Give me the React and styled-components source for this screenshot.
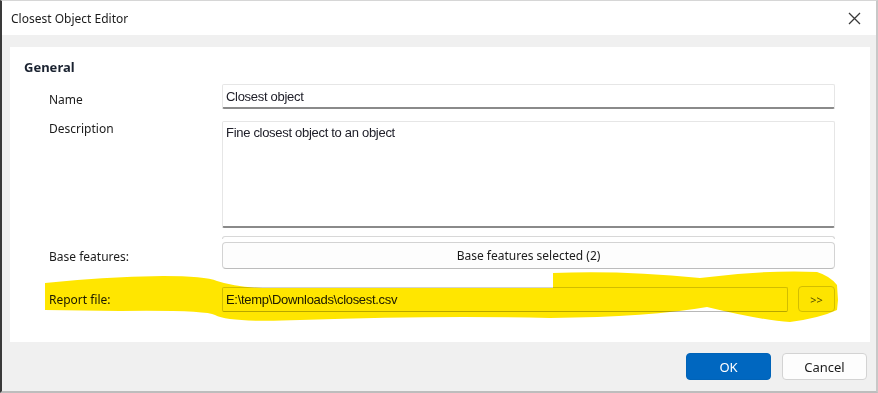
import React from "react";
import styled, { createGlobalStyle } from "styled-components";

const GlobalStyle = createGlobalStyle`
  html, body {
    margin: 0;
    padding: 0;
    background: #ffffff;
  }
  * {
    box-sizing: border-box;
  }
`;

const Window = styled.div`
  position: relative;
  width: 878px;
  height: 393px;
  display: flex;
  flex-direction: column;
  background: #f0f0f0;
  border-left: 2px solid #3a3a3a;
  border-right: 2px solid #c8c8c8;
  border-top: 1px solid #d6d6d6;
  border-bottom: 2px solid #bdbdbd;
  font-family: "Noto Sans", "Open Sans", sans-serif;
  color: #1b1b1b;
  overflow: hidden;
`;

const TitleBar = styled.div`
  height: 34px;
  flex: none;
  display: flex;
  align-items: center;
  justify-content: space-between;
  padding: 0 14px 0 9px;
  background: #ffffff;
  font-size: 12px;
`;

const CloseButton = styled.button`
  width: 16px;
  height: 16px;
  padding: 0;
  border: none;
  background: none;
  display: flex;
  align-items: center;
  justify-content: center;
`;

const Body = styled.div`
  flex: 1;
  display: flex;
  flex-direction: column;
  padding: 12px 6px 0 8px;
`;

const Panel = styled.div`
  background: #ffffff;
  height: 295px;
  padding: 10px 35px 0 14px;
`;

const SectionTitle = styled.div`
  font-size: 13px;
  font-weight: 700;
  line-height: 20px;
  color: #1a2230;
`;

const Form = styled.div`
  display: grid;
  grid-template-columns: 173px 1fr;
  margin: 1px 0 0 25px;
`;

const Label = styled.div`
  font-size: 12px;
  line-height: 16px;
  padding-top: ${(p) => p.$top || 0}px;
  margin-top: ${(p) => p.$gap || 0}px;
`;

const Field = styled.div`
  margin-top: ${(p) => p.$gap || 0}px;
  display: flex;
  flex-direction: column;
  gap: ${(p) => p.$inner || 0}px;
`;

const TextInput = styled.div`
  height: ${(p) => p.$h || 25}px;
  flex: ${(p) => (p.$grow ? 1 : "none")};
  background: #ffffff;
  border: 1px solid ${(p) => (p.$plain ? "#d2d2d2" : "#e6e6e6")};
  border-bottom: ${(p) => (p.$plain ? "1px solid #b8b8b8" : "2px solid #8a8a8a")};
  border-radius: 2px;
  padding: ${(p) => (p.$multi ? "3px 3px" : "0 3px")};
  display: flex;
  align-items: ${(p) => (p.$multi ? "flex-start" : "center")};
  font-family: "Liberation Sans", Arial, sans-serif;
  font-size: 13px;
  letter-spacing: -0.3px;
  color: #20202a;
`;

const Edge = styled.div`
  height: 3px;
  border: 1px solid #d8d8d8;
  border-bottom: none;
  border-radius: 3px 3px 0 0;
`;

const WideButton = styled.div`
  height: 27px;
  background: #fdfdfd;
  border: 1px solid #d3d3d3;
  border-bottom-color: #bcbcbc;
  border-radius: 4px;
  display: flex;
  align-items: center;
  justify-content: center;
  font-size: 12px;
`;

const FileRow = styled.div`
  display: flex;
  gap: 10px;
  align-items: center;
`;

const BrowseButton = styled.div`
  width: 37px;
  height: 26px;
  flex: none;
  background: #fdfdfd;
  border: 1px solid #d3d3d3;
  border-radius: 4px;
  display: flex;
  align-items: center;
  justify-content: center;
  font-size: 11px;
  color: #555;
`;

const Footer = styled.div`
  flex: 1;
  display: flex;
  justify-content: flex-end;
  align-items: flex-start;
  gap: 11px;
  padding: 11px 3px 0 0;
`;

const DialogButton = styled.div`
  width: 85px;
  height: 27px;
  border-radius: 4px;
  display: flex;
  align-items: center;
  justify-content: center;
  font-size: 13px;
  background: ${(p) => (p.$primary ? "#0067c0" : "#fdfdfd")};
  color: ${(p) => (p.$primary ? "#ffffff" : "#1b1b1b")};
  border: 1px solid ${(p) => (p.$primary ? "#0063b8" : "#d3d3d3")};
`;

const Highlight = styled.svg`
  position: absolute;
  left: -2px;
  top: -1px;
  pointer-events: none;
  mix-blend-mode: multiply;
`;

export default function App() {
  return (
    <>
      <GlobalStyle />
      <Window>
        <TitleBar>
          <span>Closest Object Editor</span>
          <CloseButton aria-label="Close">
            <svg width="13" height="13" viewBox="0 0 13 13">
              <path d="M1 1 L12 12 M12 1 L1 12" stroke="#3a3a3a" strokeWidth="1.3" />
            </svg>
          </CloseButton>
        </TitleBar>
        <Body>
          <Panel>
            <SectionTitle>General</SectionTitle>
            <Form>
              <Label $top={8} $gap={6}>Name</Label>
              <Field $gap={6}>
                <TextInput>Closest object</TextInput>
              </Field>

              <Label $top={0} $gap={12}>Description</Label>
              <Field $gap={12}>
                <TextInput $multi $h={107}>Fine closest object to an object</TextInput>
              </Field>

              <Label $top={13} $gap={8}>Base features:</Label>
              <Field $gap={8} $inner={3}>
                <Edge />
                <WideButton>Base features selected (2)</WideButton>
              </Field>

              <Label $top={5} $gap={18}>Report file:</Label>
              <Field $gap={17}>
                <FileRow>
                  <TextInput $grow $plain>E:\temp\Downloads\closest.csv</TextInput>
                  <BrowseButton>&gt;&gt;</BrowseButton>
                </FileRow>
              </Field>
            </Form>
          </Panel>
          <Footer>
            <DialogButton $primary>OK</DialogButton>
            <DialogButton>Cancel</DialogButton>
          </Footer>
        </Body>
        <Highlight width="878" height="393" viewBox="0 0 878 393">
          <path
            fill="#ffe600"
            d="M45 283 Q100 277 163 276 Q205 276 217 281 Q235 287 263 288 L553 288 L553 273 Q620 270 700 278 Q760 270 817 272 Q830 276 837 285 L838 300 L837 310 Q820 318 790 322 Q760 320 707 307 Q650 317 550 318 Q440 315 300 320 Q230 323 215 315 Q205 310 120 311 L45 310 Z"
          />
        </Highlight>
      </Window>
    </>
  );
}
